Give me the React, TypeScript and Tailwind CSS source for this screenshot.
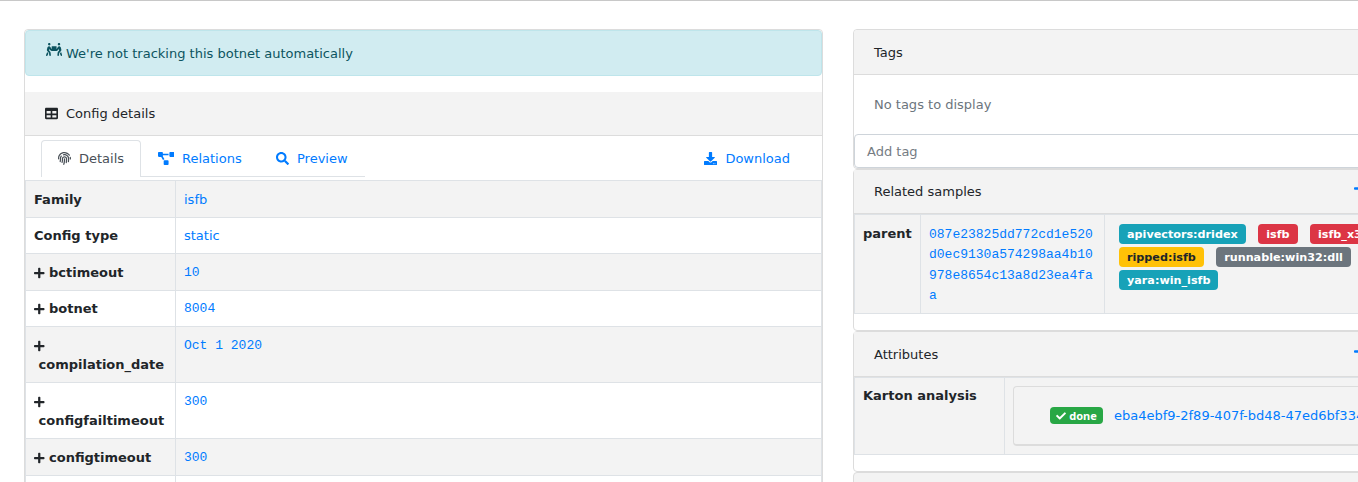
import type { ReactNode } from "react";
import {
  FaCheck,
  FaDownload,
  FaFingerprint,
  FaPeopleCarry,
  FaPlus,
  FaProjectDiagram,
  FaSearch,
  FaTable,
} from "react-icons/fa";

type ConfigRow = {
  name: string;
  value: string;
  height: string;
  shade?: boolean;
  expandable?: boolean;
  wrap?: boolean;
};

const rows: ConfigRow[] = [
  { name: "Family", value: "isfb", height: "h-[37px] pt-px", shade: true },
  { name: "Config type", value: "static", height: "h-[36px]" },
  { name: "bctimeout", value: "10", height: "h-[37px] pt-px", shade: true, expandable: true },
  { name: "botnet", value: "8004", height: "h-[36px]", expandable: true },
  { name: "compilation_date", value: "Oct 1 2020", height: "h-[56px] pt-px", shade: true, expandable: true, wrap: true },
  { name: "configfailtimeout", value: "300", height: "h-[56px] pt-px", expandable: true, wrap: true },
  { name: "configtimeout", value: "300", height: "h-[37px] pt-px", shade: true, expandable: true },
];

function Row({ row }: { row: ConfigRow }) {
  return (
    <div className={`flex shrink-0 border-t border-[#dee2e6] ${row.height} ${row.shade ? "bg-[#f3f3f3]" : "bg-white"}`}>
      <div className="-mt-px w-[150px] shrink-0 border-r border-[#dee2e6] pl-2 pt-[9px] font-bold leading-[20px]">
        {row.expandable ? (
          <div className={row.wrap ? "" : "flex items-center"}>
            <FaPlus className={row.wrap ? "mb-[4px] mt-[4px] h-[12px] w-[10.5px]" : "mr-[4.5px] h-[12px] w-[10.5px]"} />
            <div className={row.wrap ? "-mt-px pl-[4.5px]" : ""}>{row.name}</div>
          </div>
        ) : (
          row.name
        )}
      </div>
      <div
        className={`pl-2 pt-[8px] leading-[20px] text-[#007bff] ${
          row.expandable ? "font-['Liberation_Mono',monospace]" : ""
        }`}
      >
        {row.value}
      </div>
    </div>
  );
}

function Tag({ className, children }: { className: string; children: ReactNode }) {
  return (
    <span className={`flex h-5 items-center rounded px-2 pt-px text-[11.2px] font-bold leading-none ${className}`}>
      {children}
    </span>
  );
}

function SideHeader({ title, className = "h-[44px]" }: { title: string; className?: string }) {
  return (
    <div className={`flex items-center border-b border-[#dcdcdc] bg-[#f3f3f3] pl-5 ${className}`}>
      <span className="w-[480px] pt-px">{title}</span>
      <FaPlus className="mb-[6px] h-[13px] w-[11.4px] text-[#007bff]" />
    </div>
  );
}

export default function App() {
  return (
    <div className="h-[482px] w-[1358px] overflow-hidden border-t border-[#c8c8c8] bg-white font-['DejaVu_Sans',sans-serif] text-[13px] text-[#212529]">
      <div className="flex gap-[30px] pl-6 pt-7">
        <section className="h-[600px] w-[799px] shrink-0 rounded border border-[#dcdcdc]">
          <div className="mb-4 flex h-[46px] items-center rounded border border-[#bee5eb] bg-[#d1ecf1] pl-5 text-[#0c5460]">
            <FaPeopleCarry className="mb-[7px] mr-[3.75px] h-[13px] w-[16.25px]" />
            <span className="pt-0.5">We're not tracking this botnet automatically</span>
          </div>
          <div className="flex h-[44px] items-center border-b border-[#dcdcdc] bg-[#f3f3f3] pl-5">
            <FaTable className="mr-2 h-[13px] w-[13px]" />
            <span>Config details</span>
          </div>
          <div className="flex h-[44px] justify-between pl-4 pt-1">
            <nav className="flex h-[37px] w-[324px] text-[#007bff]">
              <div className="flex w-[100px] items-center rounded-t border border-b-0 border-[#dee2e6] pl-4 text-[#495057]">
                <FaFingerprint className="mb-px mr-2 h-[13px] w-[13px]" />
                Details
              </div>
              <div className="flex grow items-center border-b border-[#dee2e6] pl-[17px] pt-px">
                <FaProjectDiagram className="mr-[7.75px] h-[13px] w-[16.25px]" />
                <span className="w-[94px]">Relations</span>
                <FaSearch className="mr-2 h-[13px] w-[13px]" />
                Preview
              </div>
            </nav>
            <div className="flex h-[37px] items-center pr-8 text-[#007bff]">
              <FaDownload className="mr-2 h-[13px] w-[13px]" />
              Download
            </div>
          </div>
          <div className="border-x border-[#dee2e6]">
            {rows.map((row) => (
              <Row key={row.name} row={row} />
            ))}
            <div className="flex h-9 border-t border-[#dee2e6]">
              <div className="w-[150px] border-r border-[#dee2e6]" />
            </div>
          </div>
        </section>

        <aside className="w-[560px] shrink-0">
          <section className="h-[140px] rounded border border-[#dcdcdc]">
            <div className="flex h-[45px] items-center rounded-t border-b border-[#dcdcdc] bg-[#f3f3f3] pl-5 pt-px">Tags</div>
            <div className="flex h-[59px] items-center pl-5 text-[#6c757d]">No tags to display</div>
            <div className="flex h-[34px] items-center rounded border border-[#ced4da] bg-white pl-3 pt-0.5 text-[#757c83]">
              Add tag
            </div>
          </section>

          <section className="h-[162px] rounded border border-[#dcdcdc]">
            <SideHeader title="Related samples" />
            <div className="flex h-[100px] border-y border-l border-[#dee2e6] bg-[#f3f3f3]">
              <div className="w-[66px] shrink-0 border-r border-[#dee2e6] pl-2 pt-[9px] font-bold leading-[20px]">
                parent
              </div>
              <div className="w-[184px] shrink-0 break-all border-r border-[#dee2e6] pl-2 pr-[11px] pt-[9.5px] font-['Liberation_Mono',monospace] leading-[20.5px] text-[#007bff]">
                087e23825dd772cd1e520d0ec9130a574298aa4b10978e8654c13a8d23ea4faa
              </div>
              <div className="flex shrink-0 flex-col gap-[3px] pl-[14px] pt-[9px]">
                <div className="flex gap-[12.4px]">
                  <Tag className="bg-[#17a2b8] text-white">apivectors:dridex</Tag>
                  <Tag className="bg-[#dc3545] text-white">isfb</Tag>
                  <Tag className="bg-[#dc3545] text-white">isfb_x32</Tag>
                </div>
                <div className="flex gap-[12.4px]">
                  <Tag className="bg-[#ffc107] text-[#212529]">ripped:isfb</Tag>
                  <Tag className="bg-[#6c757d] text-white">runnable:win32:dll</Tag>
                </div>
                <div className="flex">
                  <Tag className="bg-[#17a2b8] text-white">yara:win_isfb</Tag>
                </div>
              </div>
            </div>
          </section>

          <section className="h-[141px] rounded border border-[#dcdcdc]">
            <SideHeader title="Attributes" className="h-[45px]" />
            <div className="flex h-[78px] border-y border-l border-[#dee2e6] bg-[#f3f3f3]">
              <div className="w-[150px] shrink-0 border-r border-[#dee2e6] pl-2 pt-2 font-bold leading-[20px]">
                Karton analysis
              </div>
              <div className="grow pl-2 pt-2">
                <div className="flex h-[60px] items-center rounded border border-b-2 border-[#dcdcdc] pl-9">
                  <span className="mr-[11px] flex h-[17px] w-[53px] shrink-0 items-center justify-center gap-[3px] rounded bg-[#28a745] font-['Noto_Sans',sans-serif] text-[11px] font-bold leading-none text-white">
                    <FaCheck className="h-[10px] w-[10px]" />
                    done
                  </span>
                  <span className="whitespace-nowrap text-[#007bff]">eba4ebf9-2f89-407f-bd48-47ed6bf334</span>
                </div>
              </div>
            </div>
          </section>

          <section className="h-[141px] rounded border border-[#dcdcdc] bg-[#f3f3f3]" />
        </aside>
      </div>
    </div>
  );
}
